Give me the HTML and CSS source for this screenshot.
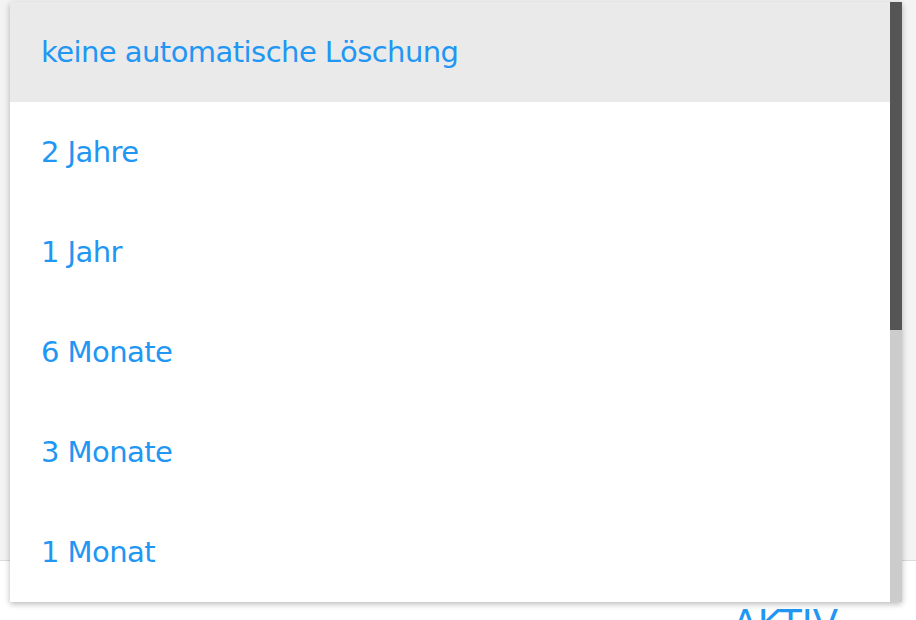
FILE: index.html
```html
<!DOCTYPE html>
<html lang="de">
<head>
<meta charset="utf-8">
<title>Löschung</title>
<link rel="stylesheet" href="styles.css">
</head>
<body>
<div class="page">
  <div class="header-area"></div>
  <div class="content-area">
    <span class="status">AKTIV</span>
  </div>
</div>
<div class="menu">
  <ul class="menu-list">
    <li class="item selected">keine automatische Löschung</li>
    <li class="item">2 Jahre</li>
    <li class="item">1 Jahr</li>
    <li class="item">6 Monate</li>
    <li class="item">3 Monate</li>
    <li class="item">1 Monat</li>
    <li class="item">2 Wochen</li>
    <li class="item">1 Woche</li>
    <li class="item">3 Tage</li>
    <li class="item">1 Tag</li>
    <li class="item">12 Stunden</li>
  </ul>
  <div class="scrollbar"><div class="thumb"></div></div>
</div>
</body>
</html>
```
FILE: styles.css
```css
html, body {
  margin: 0;
  padding: 0;
  width: 916px;
  height: 620px;
  overflow: hidden;
  font-family: "DejaVu Sans", Verdana, sans-serif;
  background: #ffffff;
}
.page {
  display: flex;
  flex-direction: column;
  height: 620px;
  overflow: hidden;
}
.header-area {
  height: 560px;
  flex: none;
  background: #f3f3f3;
  border-bottom: 1px solid #dcdcdc;
}
.content-area {
  flex: 1;
  min-height: 0;
  overflow: hidden;
  background: #ffffff;
  padding: 44px 78px 0 0;
  text-align: right;
}
.status {
  font-size: 37px;
  line-height: 37px;
  color: #2196f3;
}
.menu {
  position: absolute;
  left: 10px;
  top: 2px;
  width: 892px;
  height: 600px;
  display: flex;
  background: #ffffff;
  overflow: hidden;
  box-shadow: 0 2px 6px rgba(0, 0, 0, 0.28);
}
.menu-list {
  flex: 1;
  margin: 0;
  padding: 0;
  list-style: none;
  overflow: hidden;
}
.scrollbar {
  width: 12px;
  flex: none;
  background: #cccccc;
}
.thumb {
  height: 328px;
  background: #555555;
}
.item {
  height: 100px;
  display: flex;
  align-items: center;
  padding-left: 31px;
  font-size: 29px;
  letter-spacing: -0.55px;
  color: #2196f3;
  white-space: nowrap;
}
.item.selected {
  background: #eaeaea;
}
```
